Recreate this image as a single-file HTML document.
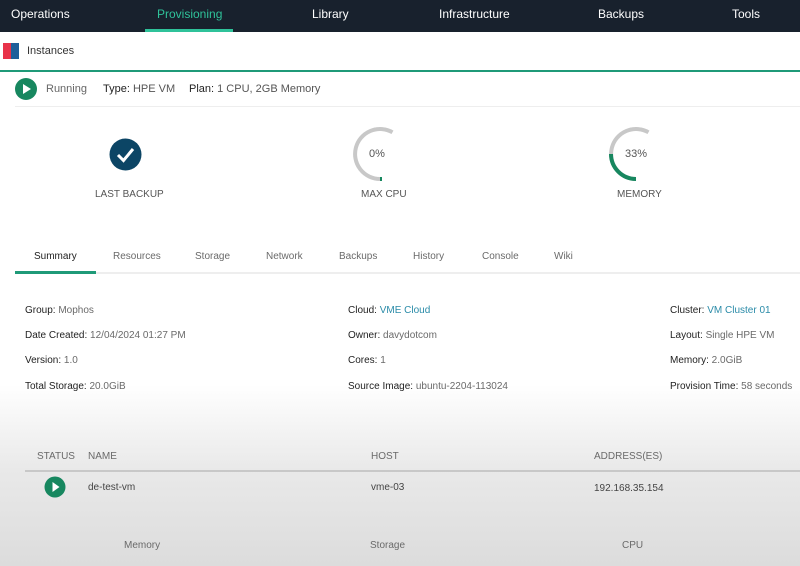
<!DOCTYPE html>
<html><head><style>
*{margin:0;padding:0;box-sizing:border-box}
body{width:800px;height:566px;overflow:hidden;font-family:"Liberation Sans",sans-serif;color:#333;position:relative;background:linear-gradient(#fff 0,#fff 385px,#e9e9e9 470px,#dcdcdc 566px)}
.nav{position:absolute;top:0;left:0;width:800px;height:32px;background:#18212d}
.nav span{position:absolute;top:7px;font-size:12px;color:#fff}
.t{position:absolute;white-space:nowrap}
.s{font-size:10px}
.b{color:#222}
.l{color:#6a6a6a}
a{color:#2a8ba8;text-decoration:none}
</style></head><body>
<div class="nav">
<span style="left:11px">Operations</span>
<span style="left:157px;color:#2fc29a">Provisioning</span>
<span style="left:312px">Library</span>
<span style="left:439px">Infrastructure</span>
<span style="left:598px">Backups</span>
<span style="left:732px">Tools</span>
<div style="position:absolute;left:145px;top:29px;width:88px;height:3px;background:#2fc29a"></div>
</div>
<div style="position:absolute;top:32px;left:0;width:800px;height:40px;background:#fff;border-bottom:2px solid #1f9a78"></div>
<div style="position:absolute;left:3px;top:43px;width:8px;height:16px;background:#e8334a"></div>
<div style="position:absolute;left:11px;top:43px;width:8px;height:16px;background:#1f5f9a"></div>
<div class="t" style="left:27px;top:45px;font-size:11px;color:#333">Instances</div>
<svg class="t" style="left:15px;top:78px" width="22" height="22"><circle cx="11" cy="11" r="11" fill="#17875f"/><path d="M8 6 L16 11 L8 16Z" fill="#fff"/></svg>
<div class="t" style="left:46px;top:83px;font-size:11px;color:#666">Running</div>
<div class="t" style="left:103px;top:83px;font-size:11px;color:#555"><span class="b">Type:</span> HPE VM</div>
<div class="t" style="left:189px;top:83px;font-size:11px;color:#555"><span class="b">Plan:</span> 1 CPU, 2GB Memory</div>
<div style="position:absolute;left:15px;top:106px;width:785px;height:1px;background:#eee"></div>
<svg class="t" style="left:109px;top:138px" width="33" height="33"><circle cx="16.5" cy="16.5" r="16" fill="#0c4565"/><path d="M9 17 L14.5 22.5 L24 11" stroke="#fff" stroke-width="3" fill="none"/></svg>
<div class="t s" style="left:95px;top:189px;color:#555">LAST BACKUP</div>
<svg class="t" style="left:350px;top:124px" width="60" height="60"><path d="M42.5 8.3 A25 25 0 1 0 30 55" stroke="#c8c8c8" stroke-width="4" fill="none"/><path d="M30 55 L32 55" stroke="#17875f" stroke-width="4"/></svg>
<div class="t" style="left:369px;top:148px;font-size:11px;color:#555">0%</div>
<div class="t s" style="left:361px;top:189px;color:#555">MAX CPU</div>
<svg class="t" style="left:606px;top:124px" width="60" height="60"><path d="M42.5 8.3 A25 25 0 1 0 30 55" stroke="#c8c8c8" stroke-width="4" fill="none"/><path d="M5 30 A25 25 0 0 0 30 55" stroke="#17875f" stroke-width="4" fill="none"/></svg>
<div class="t" style="left:625px;top:148px;font-size:11px;color:#555">33%</div>
<div class="t s" style="left:617px;top:189px;color:#555">MEMORY</div>
<div style="position:absolute;left:15px;top:272px;width:785px;height:2px;background:#eee"></div>
<div style="position:absolute;left:15px;top:271px;width:81px;height:3px;background:#1f9a78"></div>
<div class="t s" style="left:34px;top:251px;color:#222">Summary</div>
<div class="t s l" style="left:113px;top:251px">Resources</div>
<div class="t s l" style="left:195px;top:251px">Storage</div>
<div class="t s l" style="left:266px;top:251px">Network</div>
<div class="t s l" style="left:339px;top:251px">Backups</div>
<div class="t s l" style="left:413px;top:251px">History</div>
<div class="t s l" style="left:482px;top:251px">Console</div>
<div class="t s l" style="left:554px;top:251px">Wiki</div>
<div class="t s l" style="left:25px;top:305px"><span class="b">Group:</span> Mophos</div>
<div class="t s l" style="left:25px;top:330px"><span class="b">Date Created:</span> 12/04/2024 01:27 PM</div>
<div class="t s l" style="left:25px;top:355px"><span class="b">Version:</span> 1.0</div>
<div class="t s l" style="left:25px;top:381px"><span class="b">Total Storage:</span> 20.0GiB</div>
<div class="t s l" style="left:348px;top:305px"><span class="b">Cloud:</span> <a>VME Cloud</a></div>
<div class="t s l" style="left:348px;top:330px"><span class="b">Owner:</span> davydotcom</div>
<div class="t s l" style="left:348px;top:355px"><span class="b">Cores:</span> 1</div>
<div class="t s l" style="left:348px;top:381px"><span class="b">Source Image:</span> ubuntu-2204-113024</div>
<div class="t s l" style="left:670px;top:305px"><span class="b">Cluster:</span> <a>VM Cluster 01</a></div>
<div class="t s l" style="left:670px;top:330px"><span class="b">Layout:</span> Single HPE VM</div>
<div class="t s l" style="left:670px;top:355px"><span class="b">Memory:</span> 2.0GiB</div>
<div class="t s l" style="left:670px;top:381px"><span class="b">Provision Time:</span> 58 seconds</div>
<div class="t s l" style="left:37px;top:451px">STATUS</div>
<div class="t s l" style="left:88px;top:451px">NAME</div>
<div class="t s l" style="left:371px;top:451px">HOST</div>
<div class="t s l" style="left:594px;top:451px">ADDRESS(ES)</div>
<div style="position:absolute;left:25px;top:470px;width:775px;height:2px;background:#c8c8c8"></div>
<svg class="t" style="left:44px;top:476px" width="22" height="22"><circle cx="11" cy="11" r="10.5" fill="#17875f"/><path d="M8.5 6 L15.5 11 L8.5 16Z" fill="#fff"/></svg>
<div class="t s" style="left:88px;top:482px;color:#444">de-test-vm</div>
<div class="t s" style="left:371px;top:482px;color:#444">vme-03</div>
<div class="t s" style="left:594px;top:483px;color:#444">192.168.35.154</div>
<div class="t s l" style="left:124px;top:540px">Memory</div>
<div class="t s l" style="left:370px;top:540px">Storage</div>
<div class="t s l" style="left:622px;top:540px">CPU</div>
</body></html>
